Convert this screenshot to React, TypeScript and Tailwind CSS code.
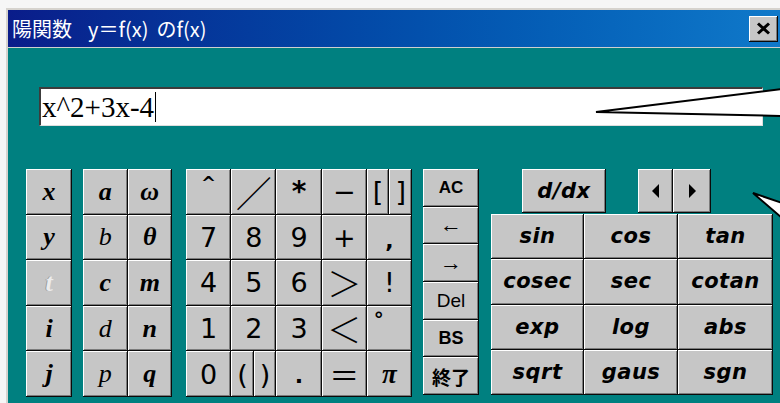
import type { ReactNode } from 'react'

// raised 3D key face, classic Windows style
const KEY =
  'flex items-center justify-center bg-[#c6c6c6] shadow-[inset_-1px_-1px_0_#0a0a0a,inset_1px_1px_0_#ffffff,inset_-2px_-2px_0_#7b7b7b]'

function Key({ className = '', children }: { className?: string; children?: ReactNode }) {
  return <div className={`${KEY} ${className}`}>{children}</div>
}

const SERIF = "font-['Liberation_Serif',serif] italic text-[26px] leading-none"
const PAD = "font-['DejaVu_Sans',sans-serif] text-[27px] font-normal leading-none"
const FN = "font-['DejaVu_Sans',sans-serif] font-bold italic text-[21px] leading-none tracking-[0.5px]"
const CTRL = "font-['Liberation_Sans',sans-serif] font-bold text-[17px] leading-none"

function VarKeys() {
  return (
    <div className="flex">
      <div className="grid h-[228px] w-[46px] grid-rows-5">
        <Key className={`${SERIF} font-bold`}>x</Key>
        <Key className={`${SERIF} font-bold`}>y</Key>
        <Key className={`${SERIF} font-bold text-[#ececec] [text-shadow:-1px_0_0_#9a9a9a]`}>t</Key>
        <Key className={`${SERIF} font-bold`}>i</Key>
        <Key className={`${SERIF} font-bold`}>j</Key>
      </div>
      <div className="ml-[11px] grid h-[228px] w-[89px] grid-cols-2 grid-rows-5">
        <Key className={`${SERIF} font-bold`}>a</Key>
        <Key className={`${SERIF} font-bold`}>ω</Key>
        <Key className={SERIF}>b</Key>
        <Key className={`${SERIF} font-bold`}>θ</Key>
        <Key className={`${SERIF} font-bold`}>c</Key>
        <Key className={`${SERIF} font-bold`}>m</Key>
        <Key className={SERIF}>d</Key>
        <Key className={`${SERIF} font-bold`}>n</Key>
        <Key className={SERIF}>p</Key>
        <Key className={`${SERIF} font-bold`}>q</Key>
      </div>
    </div>
  )
}

function NumPad() {
  return (
    <div className={`ml-[14px] grid h-[228px] w-[226px] grid-cols-5 grid-rows-5 ${PAD}`}>
      <Key className="items-start pt-[5px] text-[18px] font-bold">^</Key>
      <Key className="font-['Noto_Sans_CJK_JP',sans-serif] text-[36px] font-light">／</Key>
      <Key className="font-bold text-[28px]">*</Key>
      <Key>−</Key>
      <div className="flex">
        <Key className="flex-1">[</Key>
        <Key className="flex-1">]</Key>
      </div>

      <Key>7</Key>
      <Key>8</Key>
      <Key>9</Key>
      <Key>+</Key>
      <Key className="items-end pb-[8px] font-bold text-[22px]">,</Key>

      <Key>4</Key>
      <Key>5</Key>
      <Key>6</Key>
      <Key className="font-['Noto_Sans_CJK_JP',sans-serif] text-[34px] font-light">＞</Key>
      <Key>!</Key>

      <Key>1</Key>
      <Key>2</Key>
      <Key>3</Key>
      <Key className="font-['Noto_Sans_CJK_JP',sans-serif] text-[34px] font-light">＜</Key>
      <Key className="items-start justify-start pl-[7px] pt-[3px] text-[20px] font-bold">°</Key>

      <Key>0</Key>
      <div className="flex">
        <Key className="flex-1">(</Key>
        <Key className="flex-1">)</Key>
      </div>
      <Key className="items-end pb-[10px] font-bold text-[22px]">.</Key>
      <Key className="font-['Noto_Sans_CJK_JP',sans-serif] text-[30px]">＝</Key>
      <Key className="font-['Liberation_Serif',serif] italic font-bold text-[27px]">π</Key>
    </div>
  )
}

function EditKeys() {
  return (
    <div className={`ml-[11px] grid h-[226px] w-[56px] grid-rows-6 ${CTRL}`}>
      <Key>AC</Key>
      <Key className="font-normal text-[22px]">←</Key>
      <Key className="font-normal text-[22px]">→</Key>
      <Key className="font-medium text-[19px]">Del</Key>
      <Key className="text-[18px]">BS</Key>
      <Key className="font-['Noto_Sans_CJK_JP',sans-serif] text-[19px]">終了</Key>
    </div>
  )
}

function FuncKeys() {
  const names = ['sin', 'cos', 'tan', 'cosec', 'sec', 'cotan', 'exp', 'log', 'abs', 'sqrt', 'gaus', 'sgn']
  return (
    <div className={`ml-[12px] flex w-[282px] flex-col ${FN}`}>
      <div className="flex h-[45px]">
        <Key className="ml-[31px] h-[44px] w-[84px]">d/dx</Key>
        <Key className="ml-[32px] h-[44px] w-[35px]">
          <svg width="8" height="14" viewBox="0 0 8 14">
            <polygon points="7,0 7,14 0,7" fill="#000" />
          </svg>
        </Key>
        <Key className="h-[44px] w-[38px]">
          <svg width="8" height="14" viewBox="0 0 8 14">
            <polygon points="1,0 1,14 8,7" fill="#000" />
          </svg>
        </Key>
      </div>
      <div className="grid h-[181px] grid-cols-[93px_94px_95px] grid-rows-4">
        {names.map((n) => (
          <Key key={n}>{n}</Key>
        ))}
      </div>
    </div>
  )
}

export default function App() {
  return (
    <div className="relative h-[403px] w-[780px] overflow-hidden bg-[#f6f6f6] pl-[6px] pt-[8px] text-black">
      <div className="flex h-[420px] w-[800px] flex-col border-l-2 border-t-2 border-[#d6d3ce]">
        {/* title bar */}
        <div className="flex h-[37px] items-center bg-linear-to-r from-[#0a1c8a] to-[#117ccc] pl-[4px] pr-[28px]">
          <span className="font-['Noto_Sans_CJK_JP',sans-serif] text-[20px] leading-none text-white">
            陽関数<span className="ml-[16px]">y＝f(x)</span>
            <span className="ml-[8px]">のf(x)</span>
          </span>
          <div className={`${KEY} ml-auto h-[26px] w-[29px]`}>
            <svg width="15" height="13" viewBox="0 0 15 13">
              <path d="M2 1.5 L13 11.5 M13 1.5 L2 11.5" stroke="#000" strokeWidth="3" />
            </svg>
          </div>
        </div>
        <div className="h-px bg-[#cfcfcf]" />

        {/* client area */}
        <div className="flex flex-1 flex-col bg-[#008080]">
          <div className="ml-[31px] mt-[39px] flex h-[39px] w-[724px] items-center border-l-2 border-t-2 border-[#3c3c3c] border-b border-r border-b-[#dedede] border-r-[#dedede] bg-white pl-[1px]">
            <span className="font-['Liberation_Serif',serif] text-[29px] leading-none">x^2+3x-4</span>
            <span className="ml-px h-[30px] w-px bg-black" />
          </div>

          <div className="ml-[18px] mt-[43px] flex items-start">
            <VarKeys />
            <NumPad />
            <EditKeys />
            <FuncKeys />
          </div>
        </div>
      </div>

      {/* balloon pointers */}
      <svg className="pointer-events-none absolute left-0 top-0" width="780" height="403">
        <polygon points="596,112 782,89 782,116" fill="#fff" />
        <polyline points="782,89 596,112 782,116" fill="none" stroke="#000" strokeWidth="2" />
        <polygon points="753,193 782,203 782,218" fill="#fff" />
        <polyline points="782,203 753,193 782,218" fill="none" stroke="#000" strokeWidth="2" />
      </svg>
    </div>
  )
}
